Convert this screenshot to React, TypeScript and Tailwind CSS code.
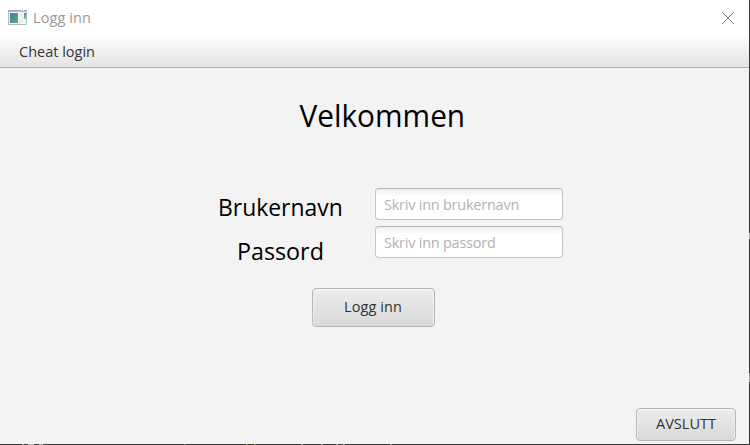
import React from "react";

const BUTTON =
  "flex items-center justify-center rounded-[4px] border border-[#b5b5b5] bg-linear-to-b from-[#ececec] to-[#d9d9d9] text-[14.5px] leading-5 text-[#333333] shadow-[inset_0_1px_0_#fafafa,inset_1px_0_0_#f0f0f0,inset_-1px_0_0_#f0f0f0]";

const INPUT =
  "block h-8 w-[188px] rounded-[4px] border border-[#c3c3c3] border-t-[#b4b4b4] bg-linear-to-b from-[#eeeeee] via-white via-25% to-white pl-2 pt-px text-[14.5px] tracking-[-0.24px] text-[#333333] outline-none placeholder:text-[#b2b2b2] placeholder:opacity-100";

// Bits of the desktop that show through the window's one-pixel frame.
const FRAME_MARKS = [
  "right-0 top-[233px] h-[6px] w-px bg-[#b3ada2]",
  "right-0 top-[373px] h-[9px] w-px bg-[#a39b93]",
  "bottom-0 left-[22px] h-px w-[2px] bg-[#a8a4a0]",
  "bottom-0 left-[28px] h-px w-[6px] bg-[#b5b5b8]",
  "bottom-0 left-[39px] h-px w-[4px] bg-[#aaa6a8]",
  "bottom-0 left-[184px] h-px w-[2px] bg-[#8a7448]",
  "bottom-0 left-[246px] h-px w-[2px] bg-[#8a8045]",
  "bottom-0 left-[254px] h-px w-[2px] bg-[#8a8045]",
  "bottom-0 left-[301px] h-px w-[2px] bg-[#9c9a96]",
  "bottom-0 left-[321px] h-px w-[2px] bg-[#9c9a96]",
  "bottom-0 left-[336px] h-px w-[2px] bg-[#9c9a96]",
  "bottom-0 left-[343px] h-px w-[2px] bg-[#9c9a96]",
  "bottom-0 left-[390px] h-px w-[2px] bg-[#9c9a96]",
];

function TitleBar() {
  return (
    <header className="flex h-9 items-center justify-between bg-white pl-2 pr-[15px]">
      <div className="flex items-center gap-[6px]">
        <svg width="19" height="16" viewBox="0 0 19 16" shapeRendering="crispEdges">
          <defs>
            <linearGradient id="pane" x1="0" y1="0" x2="1" y2="1">
              <stop offset="0" stopColor="#4478a8" />
              <stop offset="1" stopColor="#59b083" />
            </linearGradient>
            <linearGradient id="strip" x1="0" y1="0" x2="0" y2="1">
              <stop offset="0" stopColor="#4888b8" />
              <stop offset="1" stopColor="#79c58b" />
            </linearGradient>
          </defs>
          <rect x="0" y="0" width="19" height="15" fill="#b5b8bd" />
          <rect x="0" y="0" width="19" height="1" fill="#a3a7b0" />
          <rect x="1" y="2" width="17" height="12" fill="#f4f5f7" />
          <rect x="2" y="3" width="8" height="10" fill="url(#pane)" />
          <rect x="11" y="3" width="4" height="10" fill="#e9edef" />
          <rect x="16" y="3" width="2" height="6" fill="url(#strip)" />
          <rect x="13" y="0" width="1" height="1" fill="#eef0f2" />
          <rect x="15" y="0" width="1" height="1" fill="#eef0f2" />
        </svg>
        <h1 className="text-[14.5px] leading-5 tracking-[0.1px] text-[#999999]">Logg inn</h1>
      </div>
      <button aria-label="Lukk">
        <svg width="12" height="12" viewBox="0 0 12 12" stroke="#808080" strokeWidth="1">
          <path d="M0 0 12 12M12 0 0 12" />
        </svg>
      </button>
    </header>
  );
}

export default function App() {
  return (
    <div className="relative h-[445px] w-[750px] overflow-hidden">
      <div className="flex h-full flex-col border-b border-r border-[#38373a] bg-[#f3f3f3] font-['Open_Sans','Noto_Sans',sans-serif]">
        <TitleBar />
        <nav className="flex h-8 items-center border-b border-[#b5b5b5] bg-linear-to-b from-[#fdfdfd] to-[#e3e3e3] pl-[19px]">
          <button className="text-[14.5px] leading-5 text-[#333333]">Cheat login</button>
        </nav>
        <main className="flex flex-1 flex-col">
          <h2 className="mt-[27px] origin-left scale-x-[0.96] pl-[312px] text-[31px] leading-10 text-black">
            Velkommen
          </h2>
          <form className="mt-[53px] flex pl-[218px]">
            <div className="flex w-[157px] flex-col gap-3 pt-[3px] text-[24.5px] leading-8 text-black">
              <label htmlFor="user" className="origin-left scale-x-[0.935]">Brukernavn</label>
              <label htmlFor="pass" className="ml-[19px] origin-left scale-x-[0.95]">Passord</label>
            </div>
            <div className="flex flex-col gap-[6px]">
              <input id="user" className={INPUT} placeholder="Skriv inn brukernavn" />
              <input id="pass" type="password" className={INPUT} placeholder="Skriv inn passord" />
            </div>
          </form>
          <button className={`${BUTTON} ml-[312px] mt-[21px] h-[39px] w-[123px] pb-px pr-px tracking-[0.1px]`}>
            Logg inn
          </button>
          <div className="mb-[3px] mr-[13px] mt-auto flex justify-end">
            <button className={`${BUTTON} h-[33px] w-[100px] pb-px`}>AVSLUTT</button>
          </div>
        </main>
      </div>
      {FRAME_MARKS.map((mark) => (
        <span key={mark} className={`absolute ${mark}`} />
      ))}
    </div>
  );
}
